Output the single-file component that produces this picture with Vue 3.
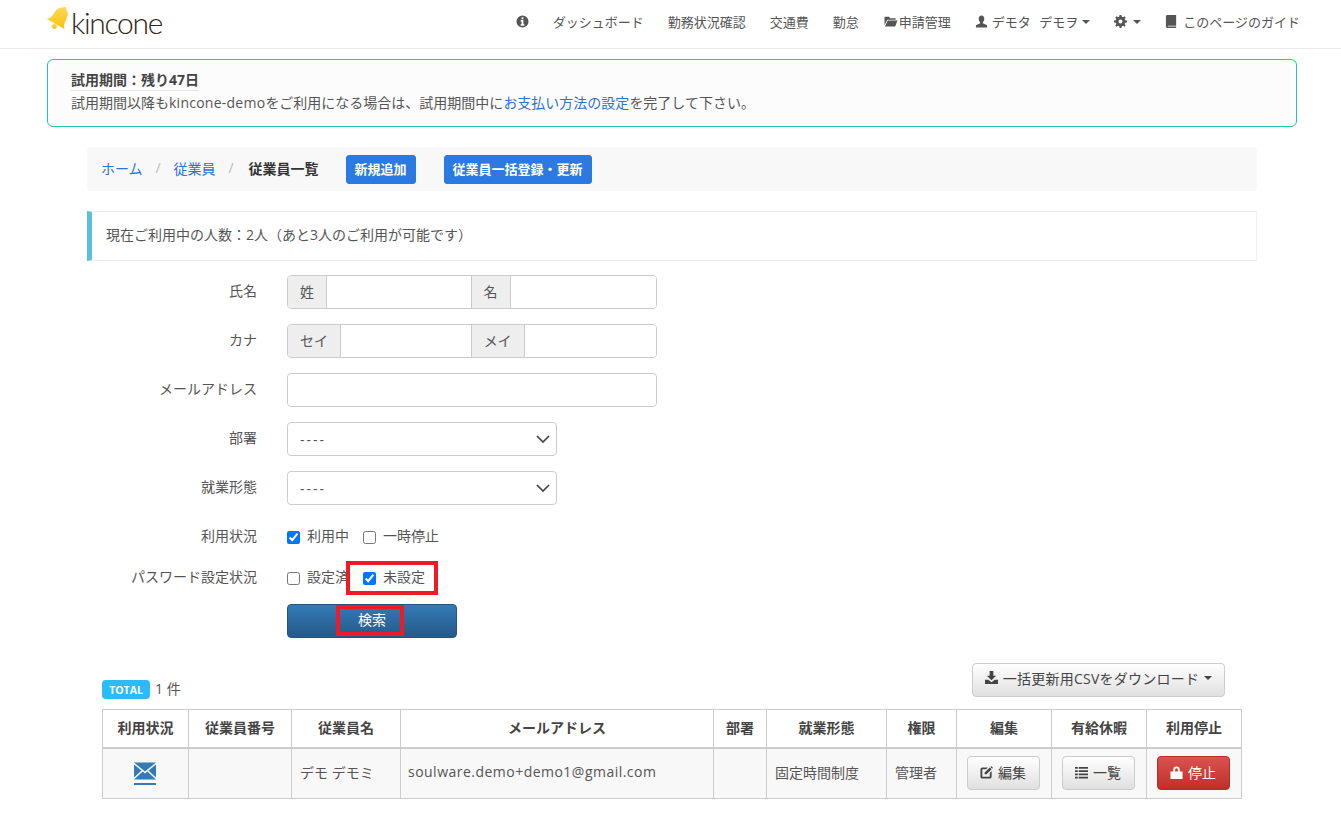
<script setup>
const icons = {
  info: 'M7 .5a6.500 6.500 0 1 0 0 13 6.500 6.500 0 0 0 0-13z M6 2.500h2v2H6z M5 5.500h3V10h1v1.500H5V10h1V7H5z',
  folder: 'M0 2h5l1 1.500h6V5H3L0 11z M3.500 6H14l-2.500 6.500H.5z',
  user: 'M7 .5c2 0 3 1.500 3 3.500 0 1.500-.7 3-1.500 3.800V9l4.500 2v2.500H1V11l4.500-2V7.800C4.700 7 4 5.500 4 4 4 2 5 .5 7 .5z',
  cog: 'M6 0h2l.4 2 1.300.5 1.700-1.100 1.200 1.200-1.100 1.700.5 1.300 2 .4v2l-2 .4-.5 1.300 1.100 1.700-1.200 1.200-1.700-1.100-1.300.5-.4 2H6l-.4-2-1.300-.5-1.700 1.100-1.200-1.200 1.100-1.700L2 8.400 0 8V6l2-.4.5-1.300-1.100-1.700 1.200-1.200 1.700 1.100L5.600 2z M7 4.800a2.200 2.200 0 1 0 0 4.400 2.200 2.200 0 0 0 0-4.400z',
  book: 'M1 1.500A1.500 1.500 0 0 1 2.500 0H12v11.500H3v1h9V14H2.500A1.500 1.500 0 0 1 1 12.500z',
  download: 'M5 0h4v5h3L7 10 2 5h3z M0 9.500h3.500L7 12l3.500-2.500H14V14H0z',
  edit: 'M2.500 1.500H8.500L6.500 3.500h-4v8h8v-4L12.500 5.500v6a2 2 0 0 1-2 2h-8a2 2 0 0 1-2-2v-8a2 2 0 0 1 2-2z M5 7l5.500-5.500 2 2L7 9H5z M11.500.5l.8-.3 1.500 1.500-.3.8-.3.5-2-2z',
  list: 'M0 1h3v2H0z M4 1h10v2H4z M0 4.500h3v2H0z M4 4.500h10v2H4z M0 8h3v2H0z M4 8h10v2H4z M0 11.500h3v2H0z M4 11.500h10v2H4z',
  lock: 'M3.500 6V4a3.500 3.500 0 0 1 7 0v2h3v8H.5V6z M5.500 6h3V4a1.500 1.500 0 0 0-3 0z',
}

const columns = [
  { name: '利用状況', width: 86 },
  { name: '従業員番号', width: 103 },
  { name: '従業員名', width: 109 },
  { name: 'メールアドレス', width: 313 },
  { name: '部署', width: 53 },
  { name: '就業形態', width: 120 },
  { name: '権限', width: 70 },
  { name: '編集', width: 95 },
  { name: '有給休暇', width: 95 },
  { name: '利用停止', width: 95 },
]
</script>

<template>
  <header class="navbar">
    <div class="logo">
      <svg class="bell" viewBox="0 0 24 28">
        <defs>
          <linearGradient id="bellFill" x1="0" y1="0" x2="1" y2="1">
            <stop offset="0" stop-color="#ffe066" />
            <stop offset="1" stop-color="#fbbf0a" />
          </linearGradient>
        </defs>
        <g transform="rotate(30 12 14)" fill="url(#bellFill)">
          <path d="M12-2c-1.400 0-2.300 1-2.300 2.200C5.500 1.300 4.500 6 4.500 10.500c0 4-1 6.500-4 8.500h23c-3-2-4-4.500-4-8.500 0-4.500-1-9.200-5.200-10.300C14.300-1 13.400-2 12-2z" />
          <circle cx="12" cy="22" r="2.800" />
        </g>
      </svg>
      <span class="logo-text">kincone</span>
    </div>
    <nav class="nav-links">
      <svg class="icon" viewBox="0 0 14 14"><path fill-rule="evenodd" :d="icons.info" /></svg>
      <a>ダッシュボード</a>
      <a>勤務状況確認</a>
      <a>交通費</a>
      <a>勤怠</a>
      <a class="with-icon folder"><svg class="icon wide" viewBox="0 0 14 14"><path :d="icons.folder" /></svg>申請管理</a>
      <a class="with-icon user"><svg class="icon" viewBox="0 0 14 14"><path :d="icons.user" /></svg>デモタ デモヲ<i class="caret"></i></a>
      <a class="with-icon cog"><svg class="icon" viewBox="0 0 14 14"><path fill-rule="evenodd" :d="icons.cog" /></svg><i class="caret"></i></a>
      <a class="with-icon guide"><svg class="icon" viewBox="0 0 14 14"><path :d="icons.book" /></svg>このページのガイド</a>
    </nav>
  </header>

  <div class="trial">
    <div class="trial-title">試用期間：残り47日</div>
    <div class="trial-body">試用期間以降も<span class="tenant">kincone-demo</span>をご利用になる場合は、試用期間中に<a>お支払い方法の設定</a>を完了して下さい。</div>
  </div>

  <main class="content">
    <div class="breadcrumb">
      <a>ホーム</a>
      <span class="slash">/</span>
      <a>従業員</a>
      <span class="slash">/</span>
      <b>従業員一覧</b>
      <button class="crumb-btn">新規追加</button>
      <button class="crumb-btn">従業員一括登録・更新</button>
    </div>

    <div class="callout">現在ご利用中の人数：2人（あと3人のご利用が可能です）</div>

    <form class="search" @submit.prevent>
      <div class="row">
        <label>氏名</label>
        <div class="group">
          <span class="addon">姓</span><input type="text">
          <span class="addon">名</span><input type="text">
        </div>
      </div>
      <div class="row">
        <label>カナ</label>
        <div class="group">
          <span class="addon">セイ</span><input type="text">
          <span class="addon">メイ</span><input type="text">
        </div>
      </div>
      <div class="row">
        <label>メールアドレス</label>
        <input class="plain" type="text">
      </div>
      <div class="row">
        <label>部署</label>
        <div class="select">
          ----
          <svg viewBox="0 0 14 8"><path d="M1 1l6 6 6-6" /></svg>
        </div>
      </div>
      <div class="row">
        <label>就業形態</label>
        <div class="select">
          ----
          <svg viewBox="0 0 14 8"><path d="M1 1l6 6 6-6" /></svg>
        </div>
      </div>
      <div class="row status">
        <label>利用状況</label>
        <span class="check first-check"><input type="checkbox" checked><span>利用中</span></span>
        <span class="check"><input type="checkbox"><span>一時停止</span></span>
      </div>
      <div class="row password">
        <label>パスワード設定状況</label>
        <span class="check first-check"><input type="checkbox"><span>設定済</span></span>
        <span class="check marked"><input type="checkbox" checked><span>未設定</span><i class="red-box"></i></span>
      </div>
      <div class="row submit">
        <button class="search-btn"><span>検索<i class="red-box"></i></span></button>
      </div>
    </form>

    <div class="list-head">
      <div class="total"><span class="total-badge">TOTAL</span><span class="total-count">1 件</span></div>
      <button class="btn csv">
        <svg class="icon" viewBox="0 0 14 14"><path :d="icons.download" /></svg>
        一括更新用CSVをダウンロード<i class="caret"></i>
      </button>
    </div>

    <table>
      <colgroup>
        <col v-for="c in columns" :key="c.name" :style="{ width: c.width + 'px' }">
      </colgroup>
      <thead>
        <tr><th v-for="c in columns" :key="c.name">{{ c.name }}</th></tr>
      </thead>
      <tbody>
        <tr>
          <td class="center">
            <svg class="mail" viewBox="0 0 22 23">
              <path d="M0 .5h22L11 9.500z M0 2.500v13l7.500-7z M22 2.500v13l-7.500-7z M8.700 9.500L11 11.500l2.300-2L22 17.500H0z M0 21h22v2H0z" />
            </svg>
          </td>
          <td></td>
          <td>デモ デモミ</td>
          <td class="email">soulware.demo+demo1@gmail.com</td>
          <td></td>
          <td>固定時間制度</td>
          <td>管理者</td>
          <td class="center">
            <button class="btn small"><svg class="icon" viewBox="0 0 14 14"><path :d="icons.edit" /></svg>編集</button>
          </td>
          <td class="center">
            <button class="btn small"><svg class="icon" viewBox="0 0 14 14"><path :d="icons.list" /></svg>一覧</button>
          </td>
          <td class="center">
            <button class="btn small danger"><svg class="icon" viewBox="0 0 14 14"><path fill-rule="evenodd" :d="icons.lock" /></svg>停止</button>
          </td>
        </tr>
      </tbody>
    </table>
  </main>
</template>

<style>
body {
  background: #fff;
}
</style>

<style scoped>
* {
  box-sizing: border-box;
}

.navbar, .trial, .content, button, input, .select {
  font-family: "Open Sans", "Noto Sans CJK JP", sans-serif;
}

.navbar {
  height: 49px;
  display: flex;
  align-items: center;
  justify-content: space-between;
  padding: 0 41px 5px 47px;
  border-bottom: 1px solid #e7e9ee;
  color: #555;
  font-size: 13px;
}

.logo {
  display: flex;
  align-items: center;
}

.bell {
  width: 22px;
  height: 28px;
  margin-bottom: 3px;
  overflow: visible;
}

.logo-text {
  font-family: "Lato", sans-serif;
  font-weight: 300;
  font-size: 30px;
  line-height: 1;
  color: #2c2420;
  margin-left: 2px;
  letter-spacing: -1.300px;
}

.nav-links {
  display: flex;
  align-items: center;
  gap: 24px;
}

.with-icon {
  display: flex;
  align-items: center;
  gap: 4px;
}

.icon {
  width: 13px;
  height: 13px;
  fill: currentColor;
  flex: none;
}

.icon.wide {
  width: 16px;
}

.folder {
  gap: 0;
}

.user {
  word-spacing: 5px;
}

.guide {
  gap: 5px;
}

.caret {
  display: inline-block;
  width: 0;
  height: 0;
  border-top: 4px solid currentColor;
  border-left: 4px solid transparent;
  border-right: 4px solid transparent;
}

.cog .caret {
  margin-left: 2px;
}

.trial {
  margin: 10px 44px 20px 47px;
  height: 68px;
  padding: 10px 23px 0;
  background: #fcfcfc;
  border: 1px solid #1cc8b0;
  border-radius: 6px;
  color: #555;
  font-size: 14px;
}

.trial-title {
  display: inline-block;
  font-weight: bold;
  color: #444;
  line-height: 20px;
  border-bottom: 1px solid #e5e5e5;
}

.trial-body {
  line-height: 24px;
}

.tenant {
  letter-spacing: .25px;
}

.trial-body a, .breadcrumb a {
  color: #2a72d4;
}

.nav-links a {
  color: #555;
}

.content {
  margin: 0 84px 0 87px;
  color: #555;
  font-size: 14px;
}

.breadcrumb {
  height: 44px;
  display: flex;
  align-items: center;
  gap: 13px;
  padding: 0 14px 3px;
  background: #f8f8f8;
  border-radius: 4px;
}

.breadcrumb b {
  color: #333;
  margin-left: 2px;
  margin-right: 14px;
}

.slash {
  color: #bbb;
  width: 5px;
}

.crumb-btn {
  height: 29px;
  min-width: 70px;
  margin: 3px 15px 0 0;
  padding: 0 8px 2px;
  border: 1px solid #2a7ae2;
  border-radius: 3px;
  background: #2a7ae2;
  color: #fff;
  font-size: 13px;
  font-weight: bold;
}

.callout {
  height: 50px;
  margin: 20px 0 14px;
  padding: 0 0 4px 14px;
  display: flex;
  align-items: center;
  border: 1px solid #eee;
  border-left: 5px solid #5bc0de;
}

.row {
  display: flex;
  align-items: center;
  height: 34px;
  margin-bottom: 15px;
}

.row label {
  width: 170px;
  margin-right: 30px;
  padding-bottom: 4px;
  text-align: right;
  flex: none;
}

.group {
  display: flex;
  width: 370px;
  height: 34px;
  border: 1px solid #ccc;
  border-radius: 4px;
  overflow: hidden;
}

.addon {
  flex: none;
  display: flex;
  align-items: center;
  padding: 0 12px 3px;
  background: #eee;
  border-right: 1px solid #ccc;
}

.group input {
  flex: 1 1 0;
  min-width: 0;
  border: 0;
  outline: 0;
  background: #fff;
}

.group input:nth-of-type(2) {
  flex-grow: 1.014;
}

.group input + .addon {
  border-left: 1px solid #ccc;
}

.plain {
  width: 370px;
  height: 34px;
  border: 1px solid #ccc;
  border-radius: 4px;
}

.select {
  position: relative;
  width: 270px;
  height: 34px;
  padding-left: 12px;
  display: flex;
  align-items: center;
  letter-spacing: 2px;
  border: 1px solid #ccc;
  border-radius: 4px;
  background: #fff;
}

.select svg {
  position: absolute;
  right: 6px;
  top: 12px;
  width: 14px;
  height: 8px;
  fill: none;
  stroke: #444;
  stroke-width: 1.700;
}

.status {
  margin-bottom: 7px;
}

.password {
  margin-bottom: 9px;
}

.check {
  display: flex;
  align-items: center;
  position: relative;
  height: 18px;
}

.check input {
  margin: 1px 7px 0 0;
  width: 13px;
  height: 13px;
}

.check span {
  padding-bottom: 4px;
}

.first-check {
  width: 76px;
}

.red-box {
  position: absolute;
  pointer-events: none;
  border: 4px solid #ed1c24;
}

.marked .red-box {
  left: -17px;
  right: -13px;
  top: -8px;
  bottom: -8px;
}

.submit {
  padding-left: 200px;
  margin-bottom: 25px;
}

.search-btn {
  width: 170px;
  height: 34px;
  padding: 0 0 2px;
  border: 1px solid #245580;
  border-radius: 4px;
  background: linear-gradient(#337ab7, #265a88);
  color: #fff;
  font-size: 14px;
}

.search-btn span {
  position: relative;
  display: inline-block;
  line-height: 17px;
  padding-bottom: 2px;
}

.search-btn .red-box {
  left: -22px;
  right: -18px;
  top: -6px;
  bottom: -6px;
}

.list-head {
  display: flex;
  justify-content: space-between;
  height: 34px;
  margin: 0 32px 12px 15px;
}

.total {
  align-self: flex-end;
  display: flex;
  align-items: center;
  gap: 5px;
  margin-bottom: -2px;
}

.total-count {
  margin-top: -3px;
}

.total-badge {
  width: 48px;
  height: 19px;
  display: flex;
  align-items: center;
  justify-content: center;
  border-radius: 4px;
  background: #2bbbfb;
  color: #fff;
  font-size: 10.500px;
  font-weight: bold;
}

.btn {
  display: inline-flex;
  align-items: center;
  justify-content: center;
  gap: 5px;
  padding: 0 0 3px;
  border: 1px solid #ccc;
  border-radius: 4px;
  background: linear-gradient(#fff, #e0e0e0);
  color: #444;
  font-size: 14px;
}

.btn .icon {
  margin-top: 2px;
}

.csv {
  width: 253px;
  height: 34px;
  padding-bottom: 5px;
  letter-spacing: .25px;
}

.csv .icon {
  margin-top: 0;
}

.csv .caret {
  margin-top: 1px;
}

.small {
  width: 73px;
  height: 34px;
}

.danger {
  background: linear-gradient(#d9534f, #c12e2a);
  border-color: #b92c28;
  color: #fff;
}

table {
  width: 1140px;
  margin-left: 15px;
  table-layout: fixed;
  border-collapse: collapse;
  font-size: 14px;
}

th {
  height: 38px;
  padding: 0 0 3px;
  border: 1px solid #ccc;
  border-bottom-width: 2px;
  color: #444;
  font-weight: bold;
  text-align: center;
}

td {
  height: 51px;
  padding: 0 8px 3px;
  border: 1px solid #ccc;
  background: #f8f8f8;
  white-space: nowrap;
}

.email {
  padding-left: 7px;
  letter-spacing: .48px;
}

td.center {
  text-align: center;
  padding: 0 2px 0 0;
}

.mail {
  width: 22px;
  height: 23px;
  fill: #337ab7;
  vertical-align: middle;
}
</style>
